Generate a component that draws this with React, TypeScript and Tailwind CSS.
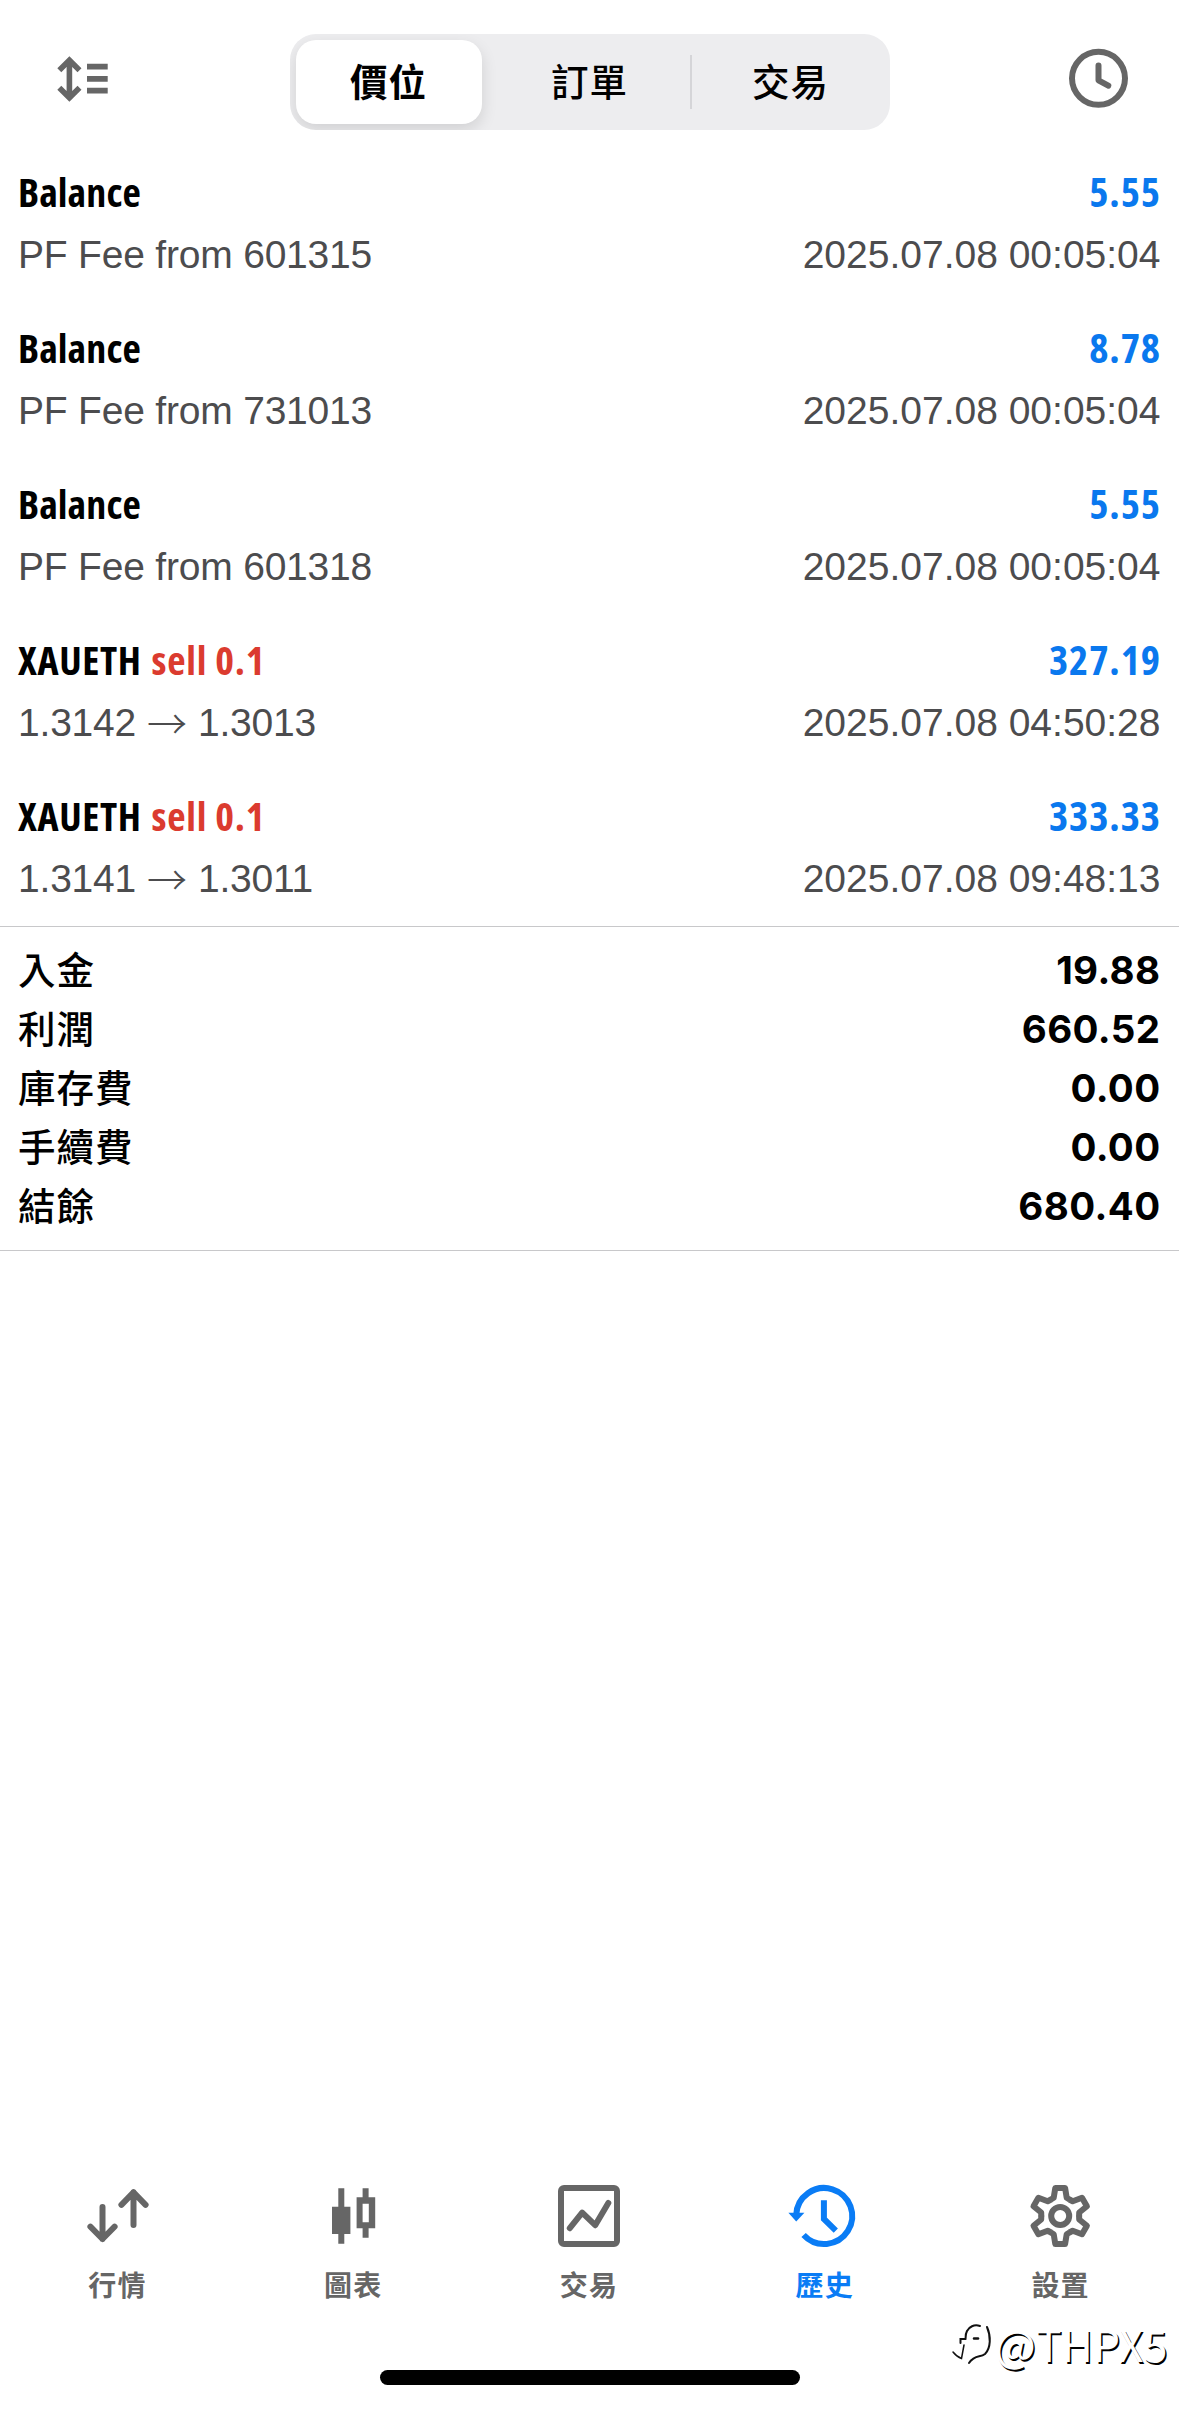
import type { ReactNode } from 'react';

type Entry = {
  title: string;
  side?: string;
  amount: string;
  detail: string;
  to?: string;
  time: string;
};

const entries: Entry[] = [
  { title: 'Balance', amount: '5.55', detail: 'PF Fee from 601315', time: '2025.07.08 00:05:04' },
  { title: 'Balance', amount: '8.78', detail: 'PF Fee from 731013', time: '2025.07.08 00:05:04' },
  { title: 'Balance', amount: '5.55', detail: 'PF Fee from 601318', time: '2025.07.08 00:05:04' },
  { title: 'XAUETH', side: 'sell 0.1', amount: '327.19', detail: '1.3142', to: '1.3013', time: '2025.07.08 04:50:28' },
  { title: 'XAUETH', side: 'sell 0.1', amount: '333.33', detail: '1.3141', to: '1.3011', time: '2025.07.08 09:48:13' },
];

const totals = [
  ['入金', '19.88'],
  ['利潤', '660.52'],
  ['庫存費', '0.00'],
  ['手續費', '0.00'],
  ['結餘', '680.40'],
];

function SortIcon() {
  return (
    <svg width="52" height="46" viewBox="0 0 52 46" fill="none" stroke="#666" strokeWidth="5.6">
      <path d="M12.4 4V42M2.3 14.3L12.4 4.2L22.5 14.3M2.3 31.7L12.4 41.8L22.5 31.7" />
      <path d="M30 10.6H50.7M30 22.9H50.7M30 34.6H50.7" />
    </svg>
  );
}

function ClockIcon() {
  return (
    <svg width="60" height="60" viewBox="0 0 60 60" fill="none" stroke="#666" strokeWidth="6" strokeLinecap="round" strokeLinejoin="round">
      <circle cx="29.5" cy="30.3" r="26.5" />
      <path d="M29.5 17.5V32.3L39.3 37.7" />
    </svg>
  );
}

function QuotesIcon() {
  return (
    <svg className="size-[62px]" viewBox="0 0 62 62" fill="none" stroke="currentColor" strokeWidth="6" strokeLinecap="round" strokeLinejoin="round">
      <path d="M15.5 22V54M3.4 41.7L15.5 54L27.6 41.7" />
      <path d="M46.5 40V7.3M34.4 19.8L46.5 7.3L58.6 19.8" />
    </svg>
  );
}

function ChartsIcon() {
  return (
    <svg className="size-[62px]" viewBox="0 0 62 62" fill="currentColor">
      <path d="M15.3 3.3H21.3V21.7H27.4V49H21.3V58.7H15.3V49H9V21.7H15.3Z" />
      <path fillRule="evenodd" d="M39.6 3.3H45.6V12.3H52.2V43.3H45.6V52.7H39.6V43.3H33.6V12.3H39.6ZM39.6 18.7V37.3H45.8V18.7Z" />
    </svg>
  );
}

function TradeIcon() {
  return (
    <svg className="size-[62px]" viewBox="0 0 62 62" fill="none" stroke="currentColor" strokeWidth="6" strokeLinecap="round" strokeLinejoin="round">
      <rect x="3" y="3" width="56" height="56" rx="3" />
      <path d="M11.8 43.2L24.2 27.6L37.2 40.2L50.3 18" />
    </svg>
  );
}

function HistoryIcon() {
  return (
    <svg className="size-[62px] overflow-visible" viewBox="0 0 62 62" fill="none" stroke="currentColor" strokeWidth="6">
      <path d="M2.2 30A28 28 0 1 1 9.6 50" />
      <path d="M29.9 15.3V34L41.8 45.6" />
      <path d="M-5.6 27.7H10.4L2.2 36.6Z" fill="currentColor" stroke="none" />
    </svg>
  );
}

function SettingsIcon() {
  const tooth = 'M-9.7 -16.2L-6.5 -18.2L-4.9 -28H4.9L6.5 -18.2L9.7 -16.2';
  return (
    <svg className="size-[62px] overflow-visible" viewBox="-30.2 -31 62 62" fill="none" stroke="currentColor" strokeWidth="6" strokeLinejoin="round">
      {[0, 60, 120, 180, 240, 300].map((angle) => (
        <path key={angle} d={tooth} transform={`rotate(${angle})`} />
      ))}
      <circle r="9" />
    </svg>
  );
}

const tabs: { label: string; icon: ReactNode; active?: boolean }[] = [
  { label: '行情', icon: <QuotesIcon /> },
  { label: '圖表', icon: <ChartsIcon /> },
  { label: '交易', icon: <TradeIcon /> },
  { label: '歷史', icon: <HistoryIcon />, active: true },
  { label: '設置', icon: <SettingsIcon /> },
];

const cjk = "font-['Noto_Sans_CJK_TC',sans-serif]";

function Header() {
  return (
    <header className="flex h-[146px] shrink-0 items-start justify-between pr-[50px] pl-[57px]">
      <div className="mt-[56px] w-[53px]">
        <SortIcon />
      </div>
      <div className={`mt-[34px] flex h-[96px] w-[600px] items-center overflow-hidden rounded-[26px] bg-[#ededef] text-[37.5px] leading-[56px] font-medium tracking-[1px] text-black ${cjk}`}>
        <div className="flex h-full w-[200px] p-[6px] pr-[8px]">
          <div className="flex flex-1 items-center justify-center rounded-[20px] bg-white font-bold shadow-[0_6px_16px_rgba(0,0,0,0.12)]">
            <span className="pb-[5px]">價位</span>
          </div>
        </div>
        <div className="flex w-[200px] justify-center pb-[5px]">訂單</div>
        <div className="h-[54px] w-[2px] bg-[#d5d5d8]" />
        <div className="flex w-[198px] justify-center pb-[5px]">交易</div>
      </div>
      <div className="mt-[48px] flex w-[60px] justify-end">
        <ClockIcon />
      </div>
    </header>
  );
}

function EntryRow({ title, side, amount, detail, to, time }: Entry) {
  return (
    <li className="h-[156px] px-[18px] pt-[15px]">
      <div className="flex justify-between font-['Open_Sans',sans-serif] text-[40px] leading-[61px] font-bold [font-stretch:78%]">
        <div className="flex gap-[10px] text-black">
          <span className={side ? 'tracking-[0.6px]' : 'tracking-[0.1px]'}>{title}</span>
          {side && <span className="tracking-[0.8px] text-[#db3b2f]">{side}</span>}
        </div>
        <span className="text-[41px] tracking-[0.9px] text-[#0a78ee] [font-stretch:80%]">{amount}</span>
      </div>
      <div className="mt-[2px] flex justify-between font-['Liberation_Sans',sans-serif] text-[39px] leading-[61px] text-[#4c4c4e]">
        <div className="flex tracking-[-0.2px]">
          <span>{detail}</span>
          {to && (
            <>
              <span className={`mx-[11px] text-[40px] font-light ${cjk}`}>→</span>
              <span>{to}</span>
            </>
          )}
        </div>
        <span className="mr-[0.5px]">{time}</span>
      </div>
    </li>
  );
}

export default function App() {
  return (
    <div className="relative flex h-[2409px] w-[1179px] flex-col overflow-hidden bg-white">
      <Header />
      <ul>
        {entries.map((entry, i) => (
          <EntryRow key={i} {...entry} />
        ))}
      </ul>
      <section className="h-[325px] border-y border-[#c8c8ca] pt-[14px] pr-[19px] pl-[18px] text-black">
        {totals.map(([label, value]) => (
          <div key={label} className="flex h-[59px] justify-between leading-[59px]">
            <span className={`-mt-[3px] text-[37.5px] font-medium tracking-[1px] ${cjk}`}>{label}</span>
            <span className="-mr-[0.5px] font-['Inter',sans-serif] text-[38.5px] font-bold tracking-[0.4px]">{value}</span>
          </div>
        ))}
      </section>
      <nav className="mt-auto flex h-[185px] shrink-0 text-[#666]">
        {tabs.map(({ label, icon, active }) => (
          <div key={label} className={`flex flex-1 flex-col items-center ${active ? 'text-[#0a7cf5]' : ''}`}>
            {icon}
            <span className={`mt-[17px] pr-[1px] text-[28px] leading-[40px] font-bold tracking-[1.2px] ${cjk}`}>{label}</span>
          </div>
        ))}
      </nav>
      <div className="mx-auto mb-[24px] h-[15px] w-[420px] shrink-0 rounded-full bg-black" />
      <div className="absolute top-[2315px] left-[949px] flex h-[60px] items-center">
        <svg className="mt-[5px]" width="46" height="60" viewBox="0 0 46 60" fill="none" stroke="#111" strokeLinecap="round">
          <path d="M31 8C25 6 20 9 18 13C16 17 17 19 16.5 21H11.5V25" strokeWidth="2" />
          <path d="M38 9C42 18 42 30 36 36C31 40 26 36 20 45" strokeWidth="2" />
          <path d="M25 20.5H29" strokeWidth="2.5" />
          <path d="M4 34Q8 39 12.5 40.5L15 27" strokeWidth="1.5" />
        </svg>
        <span className={`-mt-[4px] text-[43px] leading-[60px] text-white [text-shadow:1.5px_1.5px_0.5px_#000] ${cjk}`}>@THPX5</span>
      </div>
    </div>
  );
}
